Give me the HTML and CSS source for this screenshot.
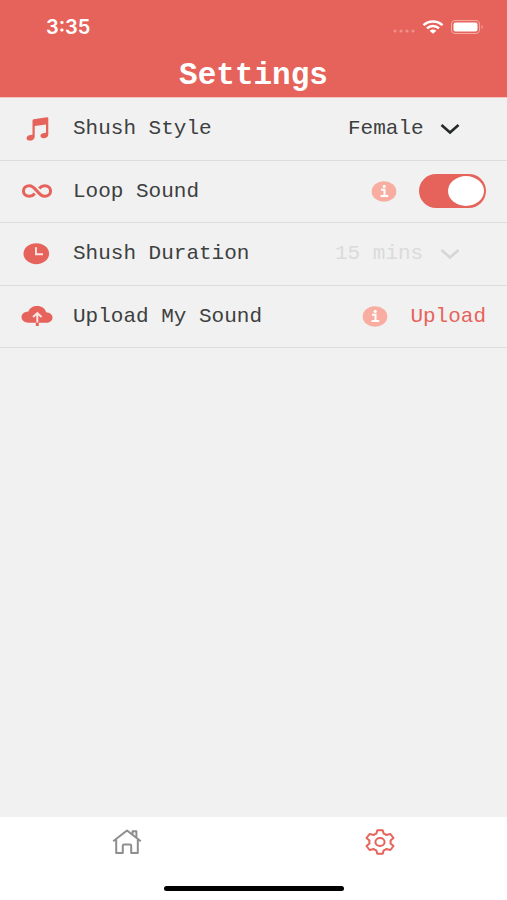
FILE: index.html
```html
<!DOCTYPE html>
<html lang="en">

<head>
    <meta charset="UTF-8">
    <meta name="viewport" content="width=device-width, initial-scale=1">
    <title>Settings</title>
    <link rel="stylesheet" href="styles.css">
</head>

<body>
    <header class="header">
        <div class="status-bar">
            <span class="time">3:35</span>
            <div class="status-icons">
                <svg class="signal" width="22" height="14" viewBox="0 0 22 14">
                    <circle cx="2" cy="11" r="1.6" />
                    <circle cx="8" cy="11" r="1.6" />
                    <circle cx="14" cy="11" r="1.6" />
                    <circle cx="20" cy="11" r="1.6" />
                </svg>
                <svg width="22" height="14" viewBox="0 0 22 14">
                    <path d="M1.5 5.2C6.8 0.2 15.2 0.2 20.5 5.2M5 8.4C8.4 5.3 13.6 5.3 17 8.4" fill="none" stroke="#fff" stroke-width="2.5" />
                    <path d="M7.6 10.8Q11 8.2 14.4 10.8L11 13.8Z" fill="#fff" />
                </svg>
                <svg width="33" height="14" viewBox="0 0 33 14">
                    <rect x="0.5" y="0.5" width="28" height="13" rx="3.5" fill="none" stroke="#f3aaa2" />
                    <rect x="2.5" y="2.5" width="24" height="9" rx="2" fill="#fff" />
                    <path d="M30.5 5Q33 7 30.5 9Z" fill="#f3aaa2" />
                </svg>
            </div>
        </div>
        <h1>Settings</h1>
    </header>

    <main>
        <div class="settings">
            <div class="row">
                <svg class="icon" width="30" height="24" viewBox="0 0 30 24">
                    <path d="M10.5 3.4Q10.6 2.4 11.6 2.2L25 0.3Q26.3 0.2 26.3 1.4V17.5C26.3 20 24 21.3 21.7 21.3C19.6 21.3 18.2 20.2 18.4 18.6C18.7 16.6 21.4 15.7 24 15.7V7.4L12.7 9V19.4C12.7 22 10.5 23.6 8 23.6C5.7 23.6 4.4 22.4 4.6 20.9C4.9 18.8 7.4 17.9 10.5 17.8Z" />
                </svg>
                <label for="style">Shush Style</label>
                <div class="dropdown">
                    <select id="style">
                        <option>Female</option>
                        <option>Male</option>
                    </select>
                    <svg width="20" height="12" viewBox="0 0 20 12">
                        <path d="M1.5 2L10 9.5L18.5 2" />
                    </svg>
                </div>
            </div>

            <div class="row">
                <svg class="icon" width="30" height="16" viewBox="0 0 30 16">
                    <path class="line" d="M12.8 10.6C10.9 12.6 9.4 13.3 7.4 13.3C4 13.3 1.4 11.2 1.4 8C1.4 4.8 4 2.7 7.4 2.7C14 2.7 16 13.3 22.6 13.3C26 13.3 28.6 11.2 28.6 8C28.6 4.8 26 2.7 22.6 2.7C20.6 2.7 19.1 3.4 17.2 5.4" />
                </svg>
                <label for="loop">Loop Sound</label>
                <button class="info" aria-label="About loop sound">
                    <svg width="26" height="21" viewBox="0 0 26 21">
                        <ellipse cx="13" cy="10.5" rx="12.3" ry="10.2" />
                        <path d="M10 8.7H13.5V15M9.6 15H17.2" />
                        <circle cx="13.2" cy="5.4" r="1.6" />
                    </svg>
                </button>
                <input type="checkbox" class="toggle" id="loop" checked>
            </div>

            <div class="row">
                <svg class="icon" width="30" height="22" viewBox="0 0 30 22">
                    <ellipse cx="14.3" cy="10.7" rx="12.8" ry="10.5" />
                    <path class="cutout" d="M14 4.2V11.2H21" />
                </svg>
                <label for="duration">Shush Duration</label>
                <div class="dropdown disabled">
                    <select id="duration" disabled>
                        <option>15 mins</option>
                    </select>
                    <svg width="20" height="12" viewBox="0 0 20 12">
                        <path d="M1.5 2L10 9.5L18.5 2" />
                    </svg>
                </div>
            </div>

            <div class="row">
                <svg class="icon" width="30" height="22" viewBox="0 0 30 22">
                    <path d="M6.4 6.5C7.6 3 11 1 15 1C19.8 1 23.4 3.7 24.1 7.3C28 7.6 30.5 9.7 30.5 12.4C30.5 15.6 27.8 17.7 24 17.7H6.5C2.4 17.7 -0.5 15.4 -0.5 12C-0.5 9 2.3 6.8 6.4 6.5Z" />
                    <path class="cutout" d="M15.3 17.8V8.6M11 12L15.3 8.2L19.6 12" />
                    <path class="line" d="M15.3 17.7V21" />
                </svg>
                <span class="label">Upload My Sound</span>
                <button class="info" aria-label="About uploads">
                    <svg width="26" height="21" viewBox="0 0 26 21">
                        <ellipse cx="13" cy="10.5" rx="12.3" ry="10.2" />
                        <path d="M10 8.7H13.5V15M9.6 15H17.2" />
                        <circle cx="13.2" cy="5.4" r="1.6" />
                    </svg>
                </button>
                <button class="upload">Upload</button>
            </div>
        </div>
    </main>

    <footer>
        <nav>
            <a href="#home" aria-label="Home">
                <svg width="30" height="26" viewBox="0 0 30 26">
                    <path d="M1.2 12.3L15 1.5L28.8 12.3M4.2 10.8V24H10.8V16.8Q10.8 15.6 12 15.6H18Q19.2 15.6 19.2 16.8V24H25.8V10.8M20.6 5.2V2.2H24.4V8.2" />
                </svg>
            </a>
            <a href="#settings" class="active" aria-label="Settings">
                <svg width="30" height="26" viewBox="0 0 30 26">
                    <path d="M12.3 1.2H17.7L18.7 4.6Q20 5.1 21.2 5.9L25.4 5L28.5 9L25.5 11.5Q25.8 13 25.5 14.5L28.5 17L25.4 21L21.2 20.1Q20 20.9 18.7 21.4L17.7 24.8H12.3L11.3 21.4Q10 20.9 8.8 20.1L4.6 21L1.5 17L4.5 14.5Q4.2 13 4.5 11.5L1.5 9L4.6 5L8.8 5.9Q10 5.1 11.3 4.6Z" />
                    <ellipse cx="15" cy="13" rx="4.6" ry="4" />
                </svg>
            </a>
        </nav>
        <div class="home-bar"></div>
    </footer>
</body>

</html>
```
FILE: styles.css
```css
* {
    box-sizing: border-box;
}

body {
    margin: 0;
    min-height: 100vh;
    display: flex;
    flex-direction: column;
    background-color: #f1f1f1;
    color: #3c4040;
    font-family: "Liberation Mono", monospace;
    font-size: 21px;
}

button,
select {
    padding: 0;
    border: none;
    background: none;
    font: inherit;
    color: inherit;
    cursor: pointer;
}

svg {
    display: block;
    flex-shrink: 0;
    overflow: visible;
}

.header {
    height: 98px;
    background-color: #e6635b;
    border-bottom: 1px solid #f3c6c3;
    color: #fff;
}

.status-bar {
    height: 54px;
    padding: 0 23px 0 46px;
    display: flex;
    align-items: center;
    justify-content: space-between;
}

.time {
    font-family: Inter, "Liberation Sans", sans-serif;
    font-size: 20px;
    font-weight: 600;
}

.status-icons {
    display: flex;
    gap: 7px;
}

.signal {
    fill: #ee918a;
}

h1 {
    margin: 0;
    font-size: 31px;
    line-height: 43px;
    text-align: center;
}

main {
    flex: 1;
}

.settings {
    height: 250px;
    display: grid;
    grid-template-rows: repeat(4, 1fr);
}

.row {
    display: flex;
    align-items: center;
    padding: 0 21px 0 22px;
    border-bottom: 1px solid #dcdcdc;
}

.row label,
.row .label {
    flex: 1;
    margin-left: 21px;
}

.icon {
    fill: #e6635b;
}

.icon .line {
    fill: none;
    stroke: #e6635b;
    stroke-width: 3;
}

.icon .cutout {
    fill: none;
    stroke: #fbe3e0;
    stroke-width: 2;
}

.dropdown {
    display: flex;
    align-items: center;
    gap: 16px;
    padding-right: 26px;
}

.dropdown select {
    appearance: none;
}

.dropdown svg {
    fill: none;
    stroke: #25292a;
    stroke-width: 2.6;
}

.dropdown.disabled select {
    color: #dbdbdb;
    opacity: 1;
}

.dropdown.disabled svg {
    stroke: #d6d6d6;
}

.info {
    margin-right: 22px;
}

.info ellipse {
    fill: #f8ada0;
}

.info path {
    fill: none;
    stroke: #fff;
    stroke-width: 2;
}

.info circle {
    fill: #fff;
}

.toggle {
    appearance: none;
    width: 67px;
    height: 34px;
    margin: 0;
    padding: 2px;
    display: flex;
    border-radius: 17px;
    background-color: #cfcfcf;
    cursor: pointer;
}

.toggle::before {
    content: "";
    width: 36px;
    height: 30px;
    border-radius: 50%;
    background-color: #fff;
}

.toggle:checked {
    justify-content: flex-end;
    background-color: #e6635b;
}

.upload {
    color: #e6635b;
}

footer {
    height: 83px;
    padding: 12px 0 9px;
    display: flex;
    flex-direction: column;
    align-items: center;
    justify-content: space-between;
    background-color: #fff;
}

nav {
    width: 100%;
    display: flex;
}

nav a {
    flex: 1;
    display: flex;
    justify-content: center;
}

nav svg {
    fill: none;
    stroke: #8e8e8e;
    stroke-width: 2;
    stroke-linejoin: round;
}

nav .active svg {
    stroke: #e6635b;
}

.home-bar {
    width: 180px;
    height: 5px;
    border-radius: 3px;
    background-color: #000;
}
```
